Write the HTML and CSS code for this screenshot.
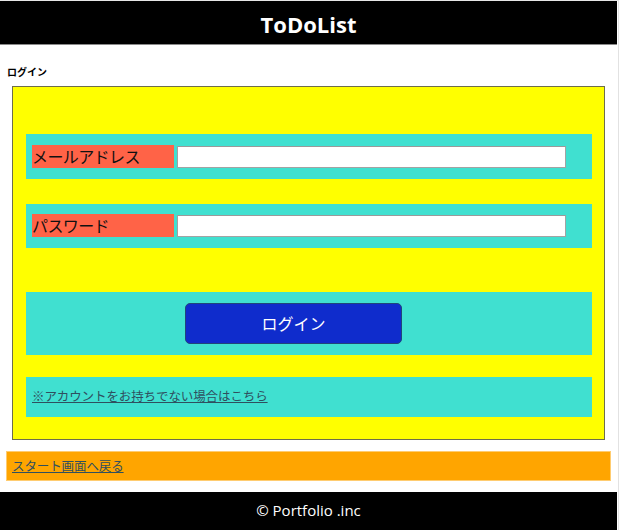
FILE: index.html
```html
<!DOCTYPE html>
<html lang="ja">
<head>
<meta charset="utf-8">
<title>ToDoList</title>
<link rel="stylesheet" href="styles.css">
</head>
<body>
<div class="page">
  <header class="site-header">
    <h1 class="site-title">ToDoList</h1>
  </header>
  <main class="main">
    <h2 class="page-label">ログイン</h2>
    <form class="login-box">
      <div class="field-row">
        <label class="field-label" for="email">メールアドレス</label>
        <input class="field-input" id="email" type="text">
      </div>
      <div class="field-row field-row-second">
        <label class="field-label" for="password">パスワード</label>
        <input class="field-input" id="password" type="password">
      </div>
      <div class="button-row">
        <button class="login-button" type="button">ログイン</button>
      </div>
      <div class="link-row">
        <a class="text-link" href="#">※アカウントをお持ちでない場合はこちら</a>
      </div>
    </form>
    <div class="back-box">
      <a class="text-link back-link" href="#">スタート画面へ戻る</a>
    </div>
  </main>
  <footer class="site-footer">© Portfolio .inc</footer>
</div>
</body>
</html>
```
FILE: styles.css
```css
html, body {
  margin: 0;
  padding: 0;
  background: #fff;
}
body {
  width: 618px;
  border-right: 1px solid #e2e2e2;
  border-top: 1px solid #e6e6e6;
  font-family: "Noto Sans CJK JP", "Open Sans", sans-serif;
}
.page {
  width: 617px;
}
.site-header {
  background: #000;
  height: 43px;
  border-bottom: 1px solid #8a8a8a;
  display: flex;
  align-items: center;
  justify-content: center;
}
.site-title {
  margin: 0;
  color: #fff;
  font-family: "Open Sans", sans-serif;
  font-weight: 700;
  font-size: 22px;
  line-height: 1;
  position: relative;
  top: 1px;
}
.main {
  padding: 0 6px;
}
.page-label {
  margin: 20px 0 0 1px;
  font-size: 10px;
  font-weight: 700;
  line-height: 14px;
  color: #000;
}
.login-box {
  margin: 7px 6px 0;
  background: #ffff00;
  border: 1px solid #6e6e4a;
  padding: 47px 12px 22px 13px;
}
.field-row {
  background: #40e0d0;
  padding: 11px 6px 11px 6px;
  display: flex;
  align-items: flex-end;
  gap: 3px;
}
.field-row-second {
  margin-top: 25px;
  padding-top: 10px;
}
.field-label {
  width: 142px;
  height: 23px;
  background: #ff6347;
  font-size: 16px;
  line-height: 22px;
  color: #111;
  letter-spacing: -0.6px;
}
.field-input {
  box-sizing: border-box;
  width: 389px;
  height: 22px;
  margin: 0;
  padding: 0 2px;
  border: 1px solid #a3a3a3;
  border-top-color: #9a9a9a;
  background: #fff;
}
.button-row {
  margin-top: 44px;
  background: #40e0d0;
  padding: 11px 0 11px 159px;
}
.login-button {
  width: 217px;
  height: 41px;
  background: #0f2ccc;
  border: 1px solid #20467a;
  border-radius: 5px;
  color: #fff;
  font-family: "Noto Sans CJK JP", sans-serif;
  font-size: 16px;
  padding: 0 0 2px;
  display: block;
}
.link-row {
  margin-top: 22px;
  background: #40e0d0;
  height: 40px;
  line-height: 35px;
  padding: 0 6px;
}
.text-link {
  color: #2f4f5f;
  font-size: 12.5px;
  text-decoration: underline;
  letter-spacing: -0.1px;
}
.back-box {
  margin-top: 11px;
  background: #ffa500;
  border: 1px solid #ffcc70;
  height: 28px;
  line-height: 25px;
  padding: 0 5px;
}
.site-footer {
  margin-top: 11px;
  background: #000;
  color: #fff;
  height: 38px;
  line-height: 37px;
  text-align: center;
  font-family: "Open Sans", sans-serif;
  font-size: 15px;
}
```
